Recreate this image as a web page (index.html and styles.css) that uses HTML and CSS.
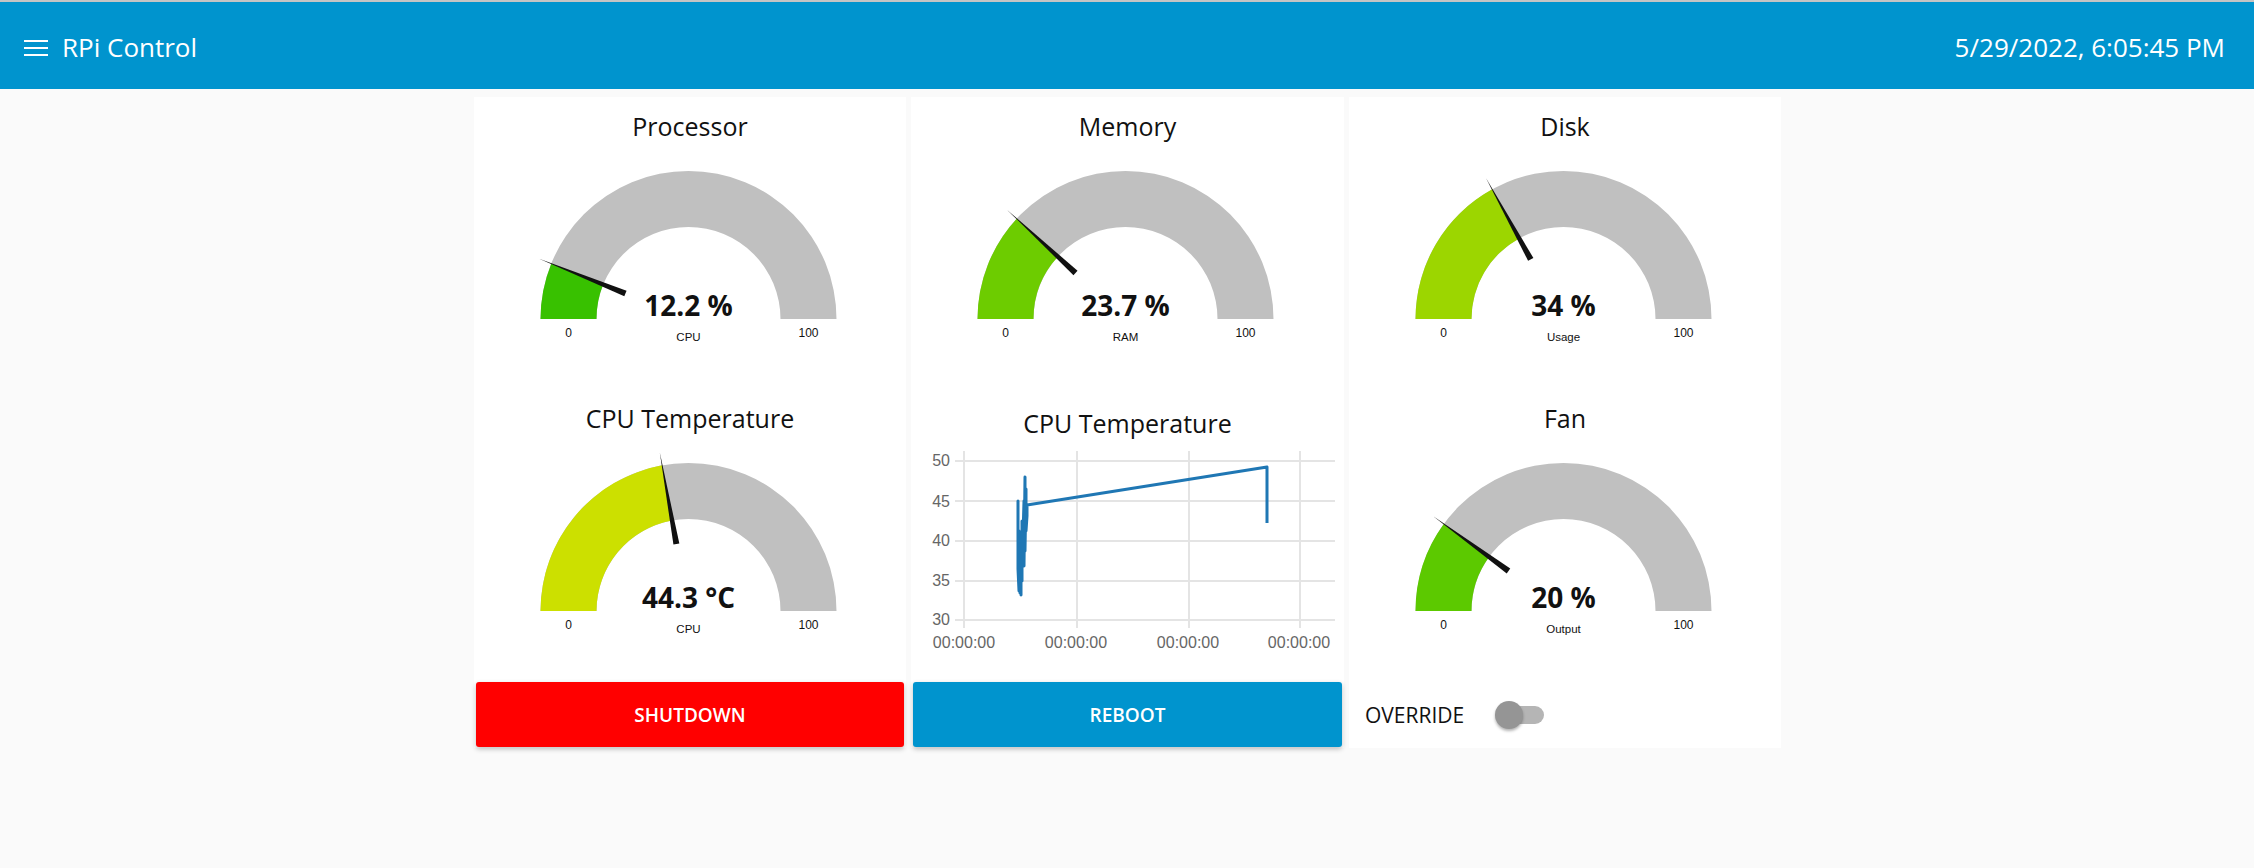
FILE: index.html
```html
<!DOCTYPE html>
<html lang="en">
<head>
<meta charset="utf-8">
<title>RPi Control</title>
<link rel="stylesheet" href="styles.css">
</head>
<body>
<header class="toolbar">
  <svg class="menu-icon" width="24" height="16" viewBox="0 0 24 16" aria-hidden="true">
    <rect x="0" y="0" width="24" height="2"/>
    <rect x="0" y="7" width="24" height="2"/>
    <rect x="0" y="14" width="24" height="2"/>
  </svg>
  <span class="app-title">RPi Control</span>
  <span class="clock">5/29/2022, 6:05:45 PM</span>
</header>

<main class="dashboard">
  <!-- Column 1 -->
  <section class="card">
    <div class="widget">
      <h3 class="widget-title">Processor</h3>
      <svg class="gauge" width="432" height="245" viewBox="0 0 432 245">
        <path class="g-track" d="M66.5,175 A148,148 0 0 1 362.5,175 L306.5,175 A92,92 0 0 0 122.5,175 Z"/>
        <path fill="#38c100" d="M66.5,175 A148,148 0 0 1 77.24,119.65 L129.17,140.59 A92,92 0 0 0 122.5,175 Z"/>
        <polygon class="g-needle" points="150.31,152.35 152.55,146.79 65.18,114.79"/>
        <text class="g-value" x="214.5" y="172">12.2 %</text>
        <text class="g-minmax" x="94.5" y="193">0</text>
        <text class="g-minmax" x="334.5" y="193">100</text>
        <text class="g-label" x="214.5" y="197">CPU</text>
      </svg>
    </div>
    <div class="widget">
      <h3 class="widget-title">CPU Temperature</h3>
      <svg class="gauge" width="432" height="245" viewBox="0 0 432 245">
        <path class="g-track" d="M66.5,175 A148,148 0 0 1 362.5,175 L306.5,175 A92,92 0 0 0 122.5,175 Z"/>
        <path fill="#cce000" d="M66.5,175 A148,148 0 0 1 188.14,29.37 L198.11,84.47 A92,92 0 0 0 122.5,175 Z"/>
        <polygon class="g-needle" points="199.44,108.62 205.34,107.56 185.82,16.57"/>
        <text class="g-value" x="214.5" y="172">44.3 °C</text>
        <text class="g-minmax" x="94.5" y="193">0</text>
        <text class="g-minmax" x="334.5" y="193">100</text>
        <text class="g-label" x="214.5" y="197">CPU</text>
      </svg>
    </div>
    <div class="control">
      <button class="btn btn-danger" type="button">Shutdown</button>
    </div>
  </section>

  <!-- Column 2 -->
  <section class="card">
    <div class="widget">
      <h3 class="widget-title">Memory</h3>
      <svg class="gauge" width="433" height="245" viewBox="0 0 433 245">
        <path class="g-track" d="M66.5,175 A148,148 0 0 1 362.5,175 L306.5,175 A92,92 0 0 0 122.5,175 Z"/>
        <path fill="#6dcc00" d="M66.5,175 A148,148 0 0 1 105.68,74.70 L146.85,112.65 A92,92 0 0 0 122.5,175 Z"/>
        <polygon class="g-needle" points="162.47,131.13 166.53,126.71 96.12,65.89"/>
        <text class="g-value" x="214.5" y="172">23.7 %</text>
        <text class="g-minmax" x="94.5" y="193">0</text>
        <text class="g-minmax" x="334.5" y="193">100</text>
        <text class="g-label" x="214.5" y="197">RAM</text>
      </svg>
    </div>
    <div class="widget chart-widget">
      <h3 class="widget-title">CPU Temperature</h3>
      <svg class="chart" width="433" height="240" viewBox="0 0 433 240">
        <g class="gridlines">
          <line x1="44" y1="20" x2="424" y2="20"/>
          <line x1="44" y1="60" x2="424" y2="60"/>
          <line x1="44" y1="100" x2="424" y2="100"/>
          <line x1="44" y1="140" x2="424" y2="140"/>
          <line x1="44" y1="179" x2="424" y2="179"/>
          <line x1="53" y1="10" x2="53" y2="187"/>
          <line x1="166" y1="10" x2="166" y2="187"/>
          <line x1="278" y1="10" x2="278" y2="187"/>
          <line x1="389" y1="10" x2="389" y2="187"/>
        </g>
        <g class="y-ticks">
          <text x="39" y="25">50</text>
          <text x="39" y="65.5">45</text>
          <text x="39" y="105">40</text>
          <text x="39" y="145">35</text>
          <text x="39" y="184">30</text>
        </g>
        <g class="x-ticks">
          <text x="53" y="207">00:00:00</text>
          <text x="165" y="207">00:00:00</text>
          <text x="277" y="207">00:00:00</text>
          <text x="388" y="207">00:00:00</text>
        </g>
        <polyline class="series" points="107,98 107,60 107,128 108,150 108,90 109,152 109,135 110,154 110,110 111,140 111,80 112,120 112,95 113,60 113,125 114,36 114,110 115,48 115,90 116,75 116,64 356,26 356,82"/>
      </svg>
    </div>
    <div class="control">
      <button class="btn btn-primary" type="button">Reboot</button>
    </div>
  </section>

  <!-- Column 3 -->
  <section class="card">
    <div class="widget">
      <h3 class="widget-title">Disk</h3>
      <svg class="gauge" width="432" height="245" viewBox="0 0 432 245">
        <path class="g-track" d="M66.5,175 A148,148 0 0 1 362.5,175 L306.5,175 A92,92 0 0 0 122.5,175 Z"/>
        <path fill="#9cd600" d="M66.5,175 A148,148 0 0 1 143.20,45.31 L170.18,94.38 A92,92 0 0 0 122.5,175 Z"/>
        <polygon class="g-needle" points="179.11,116.86 184.37,113.96 136.94,33.91"/>
        <text class="g-value" x="214.5" y="172">34 %</text>
        <text class="g-minmax" x="94.5" y="193">0</text>
        <text class="g-minmax" x="334.5" y="193">100</text>
        <text class="g-label" x="214.5" y="197">Usage</text>
      </svg>
    </div>
    <div class="widget">
      <h3 class="widget-title">Fan</h3>
      <svg class="gauge" width="432" height="245" viewBox="0 0 432 245">
        <path class="g-track" d="M66.5,175 A148,148 0 0 1 362.5,175 L306.5,175 A92,92 0 0 0 122.5,175 Z"/>
        <path fill="#5cc900" d="M66.5,175 A148,148 0 0 1 94.77,88.01 L140.07,120.92 A92,92 0 0 0 122.5,175 Z"/>
        <polygon class="g-needle" points="157.72,137.46 161.25,132.60 84.25,80.37"/>
        <text class="g-value" x="214.5" y="172">20 %</text>
        <text class="g-minmax" x="94.5" y="193">0</text>
        <text class="g-minmax" x="334.5" y="193">100</text>
        <text class="g-label" x="214.5" y="197">Output</text>
      </svg>
    </div>
    <div class="control switch-row">
      <span class="switch-label">OVERRIDE</span>
      <span class="switch" role="switch" aria-checked="false">
        <span class="switch-track"></span>
        <span class="switch-thumb"></span>
      </span>
    </div>
  </section>
</main>
</body>
</html>
```

FILE: styles.css
```css
* {
  box-sizing: border-box;
}

html, body {
  margin: 0;
  padding: 0;
}

body {
  width: 2254px;
  height: 868px;
  overflow: hidden;
  background: #fafafa;
  font-family: "Open Sans", "Noto Sans", sans-serif;
  color: #111;
}

/* ---------- toolbar ---------- */
.toolbar {
  height: 89px;
  border-top: 2px solid #c4c4c4;
  background: #0094ce;
  color: #fff;
  display: flex;
  align-items: flex-start;
  padding: 27px 29px 0 24px;
}

.menu-icon {
  display: block;
  margin-top: 11px;
  fill: #fff;
  flex: none;
}

.app-title {
  margin-left: 14px;
  font-size: 26px;
  line-height: 36px;
}

.clock {
  margin-left: auto;
  font-size: 26px;
  line-height: 36px;
}

/* ---------- dashboard grid ---------- */
.dashboard {
  display: grid;
  grid-template-columns: 432px 433px 432px;
  column-gap: 5px;
  justify-content: center;
  padding: 8px 0 0 1px;
}

.card {
  background: #fff;
  display: flex;
  flex-direction: column;
  padding-bottom: 1px;
}

.widget {
  height: 292px;
  display: flex;
  flex-direction: column;
}

.widget-title {
  margin: 0;
  padding-top: 11px;
  height: 47px;
  font-size: 25px;
  line-height: 36px;
  font-weight: 400;
  text-align: center;
  color: #111;
  flex: none;
}

.chart-widget .widget-title {
  padding-top: 16px;
  height: 52px;
}

/* ---------- gauges ---------- */
.gauge,
.chart {
  display: block;
  flex: none;
}

.g-track {
  fill: #c0c0c0;
}

.g-needle {
  fill: #111;
}

.g-value {
  font-family: "Open Sans", "Noto Sans", sans-serif;
  font-size: 28px;
  font-weight: 700;
  fill: #111;
  text-anchor: middle;
}

.g-minmax {
  font-family: "Liberation Sans", Arial, sans-serif;
  font-size: 12px;
  fill: #111;
  text-anchor: middle;
}

.g-label {
  font-family: "Liberation Sans", Arial, sans-serif;
  font-size: 11.5px;
  fill: #111;
  text-anchor: middle;
}

/* ---------- chart ---------- */
.gridlines line {
  stroke: #e4e4e4;
  stroke-width: 2;
}

.y-ticks text,
.x-ticks text {
  font-family: "Liberation Sans", Arial, sans-serif;
  font-size: 16px;
  fill: #666;
}

.y-ticks text {
  text-anchor: end;
}

.x-ticks text {
  text-anchor: middle;
}

.series {
  fill: none;
  stroke: #1f77b4;
  stroke-width: 3;
  stroke-linejoin: round;
}

/* ---------- controls ---------- */
.control {
  height: 65px;
  margin-top: 1px;
  display: flex;
  flex: none;
}

.btn {
  flex: 1;
  margin: 0 2px;
  border: none;
  border-radius: 3px;
  color: #fff;
  font-family: "Open Sans", "Noto Sans", sans-serif;
  font-size: 19px;
  font-weight: 600;
  text-transform: uppercase;
  box-shadow: 0 2px 5px 0 rgba(0, 0, 0, 0.26);
  cursor: pointer;
}

.btn-danger {
  background: #ff0000;
}

.btn-primary {
  background: #0094ce;
}

.switch-row {
  align-items: center;
  padding-left: 16px;
}

.switch-label {
  font-size: 21px;
  color: #111;
}

.switch {
  position: relative;
  display: block;
  width: 50px;
  height: 28px;
  margin-left: 31px;
}

.switch-track {
  position: absolute;
  left: 1px;
  top: 5px;
  width: 48px;
  height: 18px;
  border-radius: 9px;
  background: #b5b5b5;
}

.switch-thumb {
  position: absolute;
  left: 0;
  top: 0;
  width: 28px;
  height: 28px;
  border-radius: 50%;
  background: #959595;
  box-shadow: 0 2px 3px rgba(0, 0, 0, 0.3);
}
```
